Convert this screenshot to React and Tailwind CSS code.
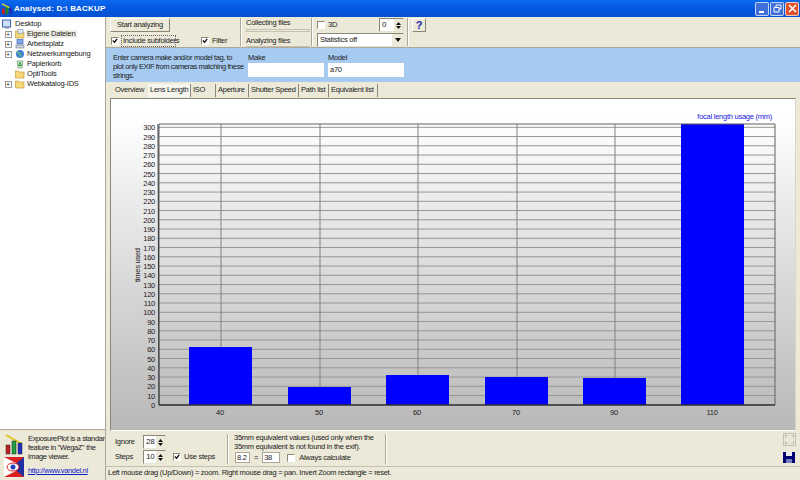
const font = { fontFamily: '"Liberation Sans", Arial, sans-serif' };

const barData = [
  { label: '40', x: 189, top: 347 },
  { label: '50', x: 288, top: 387 },
  { label: '60', x: 386, top: 375 },
  { label: '70', x: 485, top: 377 },
  { label: '90', x: 583, top: 378 },
  { label: '110', x: 681, top: 124 },
];

const yTicks = Array.from({ length: 31 }, (_, i) => i * 10);

function Check({ checked, className = '' }) {
  return (
    <span className={`flex h-[8px] w-[8px] shrink-0 items-center justify-center border border-t-[#8a8878] border-l-[#8a8878] border-r-white border-b-white bg-white ${className}`}>
      {checked && (
        <svg width="6" height="6" viewBox="0 0 7 7">
          <path d="M1 3l2 2 3-4" fill="none" stroke="#111" strokeWidth="1.6" />
        </svg>
      )}
    </span>
  );
}

function Spinner({ value, width = 'w-[23px]' }) {
  return (
    <div className={`flex h-[14px] ${width} items-center justify-between border border-t-[#8a8878] border-l-[#8a8878] border-r-[#e6e4d6] border-b-[#e6e4d6] bg-white pl-[2px]`}>
      <span className="text-[8px] leading-none text-[#222]">{value}</span>
      <span className="flex h-full w-[9px] flex-col items-center justify-center gap-[1px] bg-[#ece9d8]">
        <svg width="5" height="3" viewBox="0 0 5 3"><path d="M2.500 0L5 3H0z" fill="#111" /></svg>
        <svg width="5" height="3" viewBox="0 0 5 3"><path d="M2.500 3L5 0H0z" fill="#111" /></svg>
      </span>
    </div>
  );
}

function WinButton({ color, children }) {
  return (
    <div className={`flex h-[14px] w-[14px] items-center justify-center rounded-[2px] border border-white/70 ${color}`}>
      {children}
    </div>
  );
}

function TitleBar() {
  return (
    <div className="flex h-[17px] shrink-0 items-center bg-gradient-to-b from-[#0a6af0] via-[#0558e0] to-[#0450d0] pl-[1px] pr-[1px]">
      <svg width="12" height="12" viewBox="0 0 13 13">
        <rect x="1" y="6" width="3" height="6" fill="#c02020" />
        <rect x="5" y="3" width="3" height="9" fill="#208030" />
        <rect x="9" y="5" width="3" height="7" fill="#2030b0" />
        <path d="M1 1l8 4" stroke="#e8d020" strokeWidth="1.5" />
      </svg>
      <span className="ml-[1px] text-[8px] font-bold tracking-[0.2px] text-white">Analysed: D:\ BACKUP</span>
      <div className="ml-auto flex gap-[1px]">
        <WinButton color="bg-[#3f6fd8]"><span className="mt-[7px] mr-[2px] h-[2px] w-[5px] bg-white" /></WinButton>
        <WinButton color="bg-[#3f6fd8]">
          <svg width="9" height="9" viewBox="0 0 9 9"><path d="M3 3V1h5v4H6M1 3.500h5v4.500H1z" fill="none" stroke="#fff" /></svg>
        </WinButton>
        <WinButton color="bg-[#e0552c]">
          <svg width="9" height="9" viewBox="0 0 9 9"><path d="M1 1l7 7M8 1L1 8" stroke="#fff" strokeWidth="1.6" /></svg>
        </WinButton>
      </div>
    </div>
  );
}

function TreeIcon({ type }) {
  if (type === 'computer') {
    return (
      <svg width="10" height="10" viewBox="0 0 10 10">
        <rect x="2" y="0" width="6" height="5" fill="#7fa8e8" stroke="#355a9c" strokeWidth="0.6" />
        <rect x="1" y="6" width="8" height="3" fill="#cfd4dc" stroke="#6a7690" strokeWidth="0.6" />
      </svg>
    );
  }
  if (type === 'network') {
    return (
      <svg width="10" height="10" viewBox="0 0 10 10">
        <circle cx="5" cy="5" r="4" fill="#3f7fd8" />
        <path d="M2 3l3 2 1 3" fill="none" stroke="#6ac060" strokeWidth="1.4" />
      </svg>
    );
  }
  if (type === 'bin') {
    return (
      <svg width="10" height="10" viewBox="0 0 10 10">
        <path d="M2 2h6l-1 7H3z" fill="#cfe0c8" stroke="#5c8860" strokeWidth="0.6" />
        <path d="M5 3.500l-1.500 3h3z" fill="none" stroke="#30a040" />
      </svg>
    );
  }
  return (
    <svg width="10" height="10" viewBox="0 0 10 10">
      <path d="M0.500 2h3l1 1h4.500v6h-8.500z" fill="#f6d878" stroke="#b89030" strokeWidth="0.6" />
      {type === 'docs' && <rect x="3" y="0.500" width="5" height="4" fill="#dfe9f8" stroke="#6080b0" strokeWidth="0.500" />}
    </svg>
  );
}

function TreeRow({ label, type, expand, selected }) {
  return (
    <div className="flex h-[10px] items-center">
      <span className="flex w-[15px] justify-center pl-[1px]">
        {expand && (
          <span className="flex h-[7px] w-[7px] items-center justify-center border border-[#9a9a9a] bg-white text-[7px] leading-none text-[#333]">+</span>
        )}
      </span>
      <TreeIcon type={type} />
      <span className={`ml-[1px] px-[1px] text-[7.500px] leading-none tracking-[-0.2px] text-[#222] ${selected ? 'bg-[#f0eee4]' : ''}`}>{label}</span>
    </div>
  );
}

function Sidebar() {
  return (
    <div className="flex w-[106px] shrink-0 flex-col border-r border-[#aca899]">
      <div className="flex h-[413px] flex-col border-b border-[#aca899] bg-white pt-[1px]">
        <div className="mt-[1px] flex h-[10px] items-center pl-[2px]">
          <svg width="10" height="10" viewBox="0 0 10 10">
            <rect x="0.500" y="1" width="8" height="7" fill="#cfe0f8" stroke="#3a62b0" />
            <rect x="3" y="8" width="4" height="1.500" fill="#7a8aa8" />
          </svg>
          <span className="ml-[3px] text-[7.500px] leading-none tracking-[-0.2px] text-[#222]">Desktop</span>
        </div>
        <TreeRow label="Eigene Dateien" type="docs" expand selected />
        <TreeRow label="Arbeitsplatz" type="computer" expand />
        <TreeRow label="Netzwerkumgebung" type="network" expand />
        <TreeRow label="Papierkorb" type="bin" />
        <TreeRow label="OptiTools" type="folder" />
        <TreeRow label="Webkatalog-IDS" type="folder" expand />
      </div>
      <div className="flex flex-1 gap-[2px] overflow-hidden bg-[#ece9d8] pl-[4px] pt-[4px]">
        <div className="flex w-[22px] flex-col gap-[2px]">
          <svg width="22" height="21" viewBox="0 0 22 21">
            <path d="M2 1l16 9" stroke="#e0c820" strokeWidth="2" />
            <rect x="2" y="11" width="4" height="9" fill="#c02020" stroke="#222" strokeWidth="0.500" />
            <rect x="8" y="7" width="4" height="13" fill="#20a040" stroke="#222" strokeWidth="0.500" />
            <rect x="14" y="9" width="4" height="11" fill="#2030c0" stroke="#222" strokeWidth="0.500" />
          </svg>
          <svg width="20" height="20" viewBox="0 0 20 20">
            <rect width="20" height="20" fill="#d82020" />
            <path d="M0 0l20 10L0 20z" fill="#fff" />
            <path d="M20 0L8 10l12 10z" fill="#2030a0" />
            <ellipse cx="9" cy="10" rx="6" ry="4" fill="#fff" stroke="#d82020" />
            <circle cx="9" cy="10" r="2.500" fill="#2040c0" />
          </svg>
        </div>
        <div className="flex flex-col text-[7.500px] leading-[9px] tracking-[-0.35px] text-[#222]">
          <span className="whitespace-nowrap">ExposurePlot is a standard</span>
          <span className="whitespace-nowrap">feature in "WegaZ" the</span>
          <span>image viewer.</span>
          <span className="mt-[5px] whitespace-nowrap text-[#1020c8] underline">http://www.vandel.nl</span>
        </div>
      </div>
    </div>
  );
}

function Separator() {
  return <div className="h-[28px] w-[2px] shrink-0 border-l border-r border-l-[#aca899] border-r-white" />;
}

function Toolbar() {
  return (
    <div className="flex h-[31px] shrink-0 items-start border-b border-[#aca899] pl-[4px] pt-[1px] text-[7.500px] leading-none tracking-[-0.25px] text-[#222]">
      <div className="flex w-[130px] flex-col">
        <div className="flex h-[14px] w-[60px] items-center justify-center border border-t-white border-l-white border-r-[#8a8878] border-b-[#8a8878] bg-[#ece9d8] whitespace-nowrap">Start analyzing</div>
        <div className="mt-[3px] flex items-center">
          <Check checked className="ml-[1px]" />
          <span className="ml-[2px] w-[55px] border border-dotted border-[#666] px-[1px] py-[1px] whitespace-nowrap">Include subfolders</span>
          <Check checked className="ml-[25px]" />
          <span className="ml-[3px]">Filter</span>
        </div>
      </div>
      <Separator />
      <div className="ml-[4px] flex w-[65px] flex-col">
        <span className="mt-[1px]">Collecting files</span>
        <div className="mt-[2px] h-[3px] w-[64px] border border-[#c4c1ae]" />
        <span className="mt-[5px]">Analyzing files</span>
        <div className="mt-[2px] h-[3px] w-[64px] border border-[#c4c1ae]" />
      </div>
      <Separator />
      <div className="ml-[4px] flex w-[87px] flex-col">
        <div className="flex items-center">
          <Check />
          <span className="ml-[3px]">3D</span>
          <span className="ml-auto"><Spinner value="0" width="w-[25px]" /></span>
        </div>
        <div className="mt-[1px] flex h-[14px] items-center justify-between border border-t-[#8a8878] border-l-[#8a8878] border-r-[#e6e4d6] border-b-[#e6e4d6] bg-white pl-[2px]">
          <span>Statistics off</span>
          <span className="flex h-full w-[11px] items-center justify-center bg-[#ece9d8]">
            <svg width="6" height="4" viewBox="0 0 6 4"><path d="M3 4l3-4H0z" fill="#111" /></svg>
          </span>
        </div>
      </div>
      <div className="ml-[3px]"><Separator /></div>
      <div className="ml-[3px] flex h-[14px] w-[14px] items-center justify-center border border-t-white border-l-white border-r-[#8a8878] border-b-[#8a8878] text-[11px] font-bold text-[#2020b0]">?</div>
    </div>
  );
}

function FilterPanel() {
  return (
    <div className="flex h-[34px] shrink-0 bg-[#a6caf0] pl-[7px] pt-[5px] text-[7.500px] leading-[9px] tracking-[-0.25px] text-[#222]">
      <div className="w-[135px] whitespace-nowrap tracking-[-0.4px]">
        <div>Enter camera make and/or model tag, to</div>
        <div>plot only EXIF from cameras matching these</div>
        <div>strings.</div>
      </div>
      <div className="w-[80px]">
        <div>Make</div>
        <div className="mt-[1px] h-[14px] w-[76px] bg-white" />
      </div>
      <div className="w-[76px]">
        <div>Model</div>
        <div className="mt-[1px] h-[14px] bg-white pl-[2px] leading-[14px]">a70</div>
      </div>
    </div>
  );
}

function Tabs() {
  const tabs = [
    { label: 'Overview', w: 'w-[35px]' },
    { label: 'Lens Length', w: 'w-[43px]', active: true },
    { label: 'ISO', w: 'w-[25px]', sep: true },
    { label: 'Aperture', w: 'w-[33px]', sep: true },
    { label: 'Shutter Speed', w: 'w-[50px]', sep: true },
    { label: 'Path list', w: 'w-[30px]', sep: true },
    { label: 'Equivalent list', w: 'w-[49px]', sep: true },
  ];
  return (
    <div className="flex h-[16px] shrink-0 items-center pl-[7px] text-[7.500px] leading-none tracking-[-0.25px] text-[#222]">
      {tabs.map((t) => (
        <div key={t.label} className={`flex h-[13px] items-center whitespace-nowrap pl-[2px] ${t.w} ${t.sep ? 'border-r border-[#8a8878]' : ''} ${t.active ? 'border-r border-[#8a8878] bg-[#f6f5ee]' : ''}`}>
          {t.label}
        </div>
      ))}
    </div>
  );
}

function Chart() {
  // svg origin sits at the panel corner (111, 99)
  const ox = 111;
  const oy = 99;
  const yOf = (v) => 404.8 - v * 0.925 - oy;
  return (
    <div className="mr-[4px] ml-[4px] h-[333px] shrink-0 border border-t-[#8a8878] border-l-[#8a8878] border-r-[#d8d6c8] border-b-white bg-gradient-to-b from-white from-[5%] to-[#b8b8b8]">
      <svg width="684" height="331" viewBox="0 0 684 331" style={font}>
        {yTicks.map((v) => (
          <g key={v}>
            <line x1={159 - ox} x2={775 - ox} y1={yOf(v)} y2={yOf(v)} stroke="#959595" />
            <text x={155 - ox} y={yOf(v) + 3} textAnchor="end" fontSize="7.500" letterSpacing="-0.25" fill="#222">{v}</text>
          </g>
        ))}
        {barData.map((b) => (
          <line key={b.label} x1={b.x + 32 - ox} x2={b.x + 32 - ox} y1={124 - oy} y2={405 - oy} stroke="#808080" />
        ))}
        {barData.map((b) => (
          <g key={b.label}>
            <rect x={b.x - ox} y={b.top - oy} width={63} height={405 - b.top} fill="#0000ff" />
            <text x={b.x + 31 - ox} y={415 - oy} textAnchor="middle" fontSize="7.500" letterSpacing="-0.25" fill="#222">{b.label}</text>
          </g>
        ))}
        <path d={`M${159 - ox} ${405 - oy}V${124 - oy}H${775 - ox}V${405 - oy}`} fill="none" stroke="#606060" />
        <line x1={158 - ox} x2={159 - ox} y1={124 - oy} y2={405 - oy} stroke="#333" />
        <line x1={159 - ox} x2={775 - ox} y1={405 - oy} y2={405 - oy} stroke="#333" strokeWidth="1.500" />
        <text x={772 - ox} y={119 - oy} textAnchor="end" fontSize="7.500" letterSpacing="-0.25" fill="#1a1ae0">focal length usage (mm)</text>
        <text transform={`translate(${140 - ox} ${282 - oy}) rotate(-90)`} fontSize="7.500" letterSpacing="-0.25" fill="#222">times used</text>
      </svg>
    </div>
  );
}

function BottomPanel() {
  return (
    <div className="flex h-[35px] shrink-0 items-start text-[7.500px] leading-none tracking-[-0.25px] text-[#222]">
      <div className="ml-[9px] flex w-[112px] flex-col pt-[4px]">
        <div className="flex items-center">
          <span className="w-[28px]">Ignore</span>
          <Spinner value="28" />
        </div>
        <div className="mt-[1px] flex items-center">
          <span className="w-[28px]">Steps</span>
          <Spinner value="10" />
          <Check checked className="ml-[7px]" />
          <span className="ml-[3px] whitespace-nowrap">Use steps</span>
        </div>
      </div>
      <div className="mt-[3px] h-[30px] w-[2px] border-l border-r border-l-[#aca899] border-r-white" />
      <div className="ml-[5px] flex w-[151px] flex-col pt-[2px] leading-[9px]">
        <span className="whitespace-nowrap">35mm equivalent values (used only when the</span>
        <span className="whitespace-nowrap">35mm equivalent is not found in the exif).</span>
        <div className="mt-[1px] flex items-center">
          <span className="ml-[1px] h-[11px] w-[15px] border border-[#aca899] bg-white pl-[1px] leading-[9px]">8.2</span>
          <span className="mx-[4px]">=</span>
          <span className="h-[11px] w-[18px] border border-[#aca899] bg-white pl-[1px] leading-[9px]">38</span>
          <Check className="ml-[7px]" />
          <span className="ml-[4px] whitespace-nowrap">Always calculate</span>
        </div>
      </div>
      <div className="mt-[3px] h-[30px] w-[2px] border-l border-r border-l-[#aca899] border-r-white" />
      <div className="mr-[4px] ml-auto flex w-[13px] flex-col gap-[6px] pt-[2px]">
        <div className="flex h-[13px] w-[13px] items-center justify-center border border-[#c4c1ae]">
          <svg width="9" height="9" viewBox="0 0 9 9">
            <path d="M0 3V0h3M6 0h3v3M9 6v3H6M3 9H0V6" fill="none" stroke="#9a988a" />
          </svg>
        </div>
        <svg width="12" height="11" viewBox="0 0 12 11">
          <rect width="12" height="11" fill="#000070" />
          <rect x="3" y="0" width="6" height="4" fill="#e8e8f0" />
          <rect x="3" y="7" width="6" height="4" fill="#7080c0" />
        </svg>
      </div>
    </div>
  );
}

export default function App() {
  return (
    <div className="flex h-[480px] w-[800px] flex-col overflow-hidden bg-[#ece9d8]" style={font}>
      <TitleBar />
      <div className="flex min-h-0 flex-1">
        <Sidebar />
        <div className="flex min-w-0 flex-1 flex-col">
          <Toolbar />
          <FilterPanel />
          <Tabs />
          <Chart />
          <BottomPanel />
          <div className="flex h-[13px] items-center border-t border-[#c4c1ae] pl-[2px] text-[7.500px] leading-none tracking-[-0.28px] whitespace-nowrap text-[#222]">
            Left mouse drag (Up/Down) = zoom. Right mouse drag = pan. Invert Zoom rectangle = reset.
          </div>
        </div>
      </div>
    </div>
  );
}
